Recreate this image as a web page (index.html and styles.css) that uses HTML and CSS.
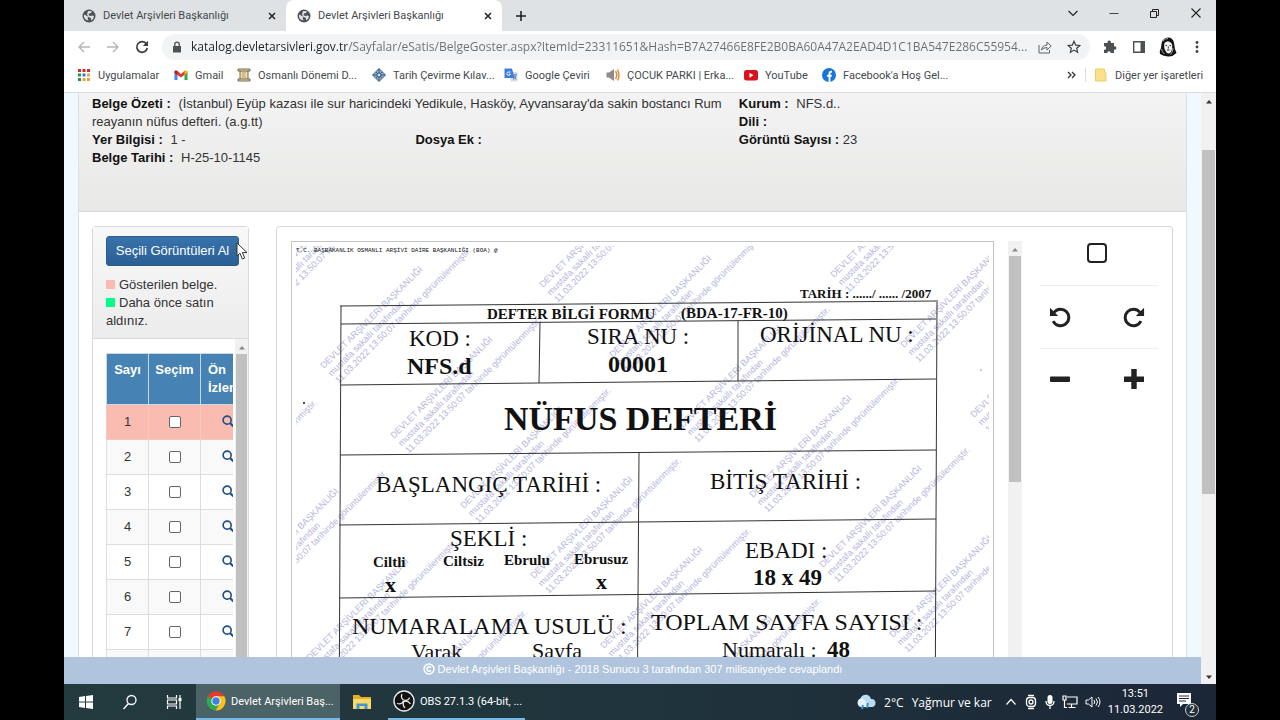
FILE: index.html
```html
<!DOCTYPE html>
<html lang="tr">
<head>
<meta charset="utf-8">
<title>Devlet Arşivleri Başkanlığı</title>
<link rel="stylesheet" href="styles.css">
</head>
<body>
<svg class="defs" aria-hidden="true">
  <symbol id="globe" viewBox="0 0 14 14"><circle cx="7" cy="7" r="6.5" fill="#4d5156"/><path d="M2 5.5 5 7l1.500 1-1 1 1 2.500Q3 11 2 8zM6 2l4 .2-1 1.800-2 .5-.5 1.500L8 7l3-.5 1 1q-.5 3-3 4L9 9 6.500 8 5 5.500z" fill="#dfe2e6"/></symbol>
  <symbol id="cross" viewBox="0 0 10 10"><path d="M2 2l6 6M8 2l-6 6" stroke="#222" stroke-width="1.500" fill="none"/></symbol>
  <symbol id="lens" viewBox="0 0 14 14"><circle cx="6" cy="6" r="4.700" fill="none" stroke="#1f4f82" stroke-width="1.900"/><path d="M9.300 9.300l4 4" stroke="#1f4f82" stroke-width="2.500"/></symbol>
  <symbol id="tri-up" viewBox="0 0 8 5"><path d="M1 4.500h6L4 1z" fill="currentColor"/></symbol>
  <symbol id="tri-down" viewBox="0 0 8 5"><path d="M1 .5h6L4 4z" fill="currentColor"/></symbol>
</svg>
<div class="screen">
  <header class="tabstrip">
    <button class="tab first"><svg class="i14"><use href="#globe"/></svg><span>Devlet Arşivleri Başkanlığı</span><svg class="i10"><use href="#cross"/></svg></button>
    <button class="tab active"><svg class="i14"><use href="#globe"/></svg><span>Devlet Arşivleri Başkanlığı</span><svg class="i10"><use href="#cross"/></svg></button>
    <button class="ghost newtab" aria-label="Yeni sekme"><svg width="12" height="12" viewBox="0 0 12 12"><path d="M6 1v10M1 6h10" stroke="#222" stroke-width="1.600"/></svg></button>
    <div class="wincontrols">
      <button class="ghost" aria-label="Sekme ara"><svg width="12" height="12" viewBox="0 0 12 12"><path d="M1.500 4l4.500 4.500L10.500 4" fill="none" stroke="#222" stroke-width="1.200"/></svg></button>
      <button class="ghost" aria-label="Küçült"><svg width="12" height="12" viewBox="0 0 12 12"><path d="M1.500 6.500h9" stroke="#444"/></svg></button>
      <button class="ghost" aria-label="Geri yükle"><svg width="12" height="12" viewBox="0 0 12 12"><path d="M1.500 4.500h6v6h-6zM3.500 4V2.500h6v6H8" fill="none" stroke="#222"/></svg></button>
      <button class="ghost" aria-label="Kapat"><svg width="12" height="12" viewBox="0 0 12 12"><path d="M1.500 1.500l9 9M10.500 1.500l-9 9" stroke="#222" stroke-width="1.100"/></svg></button>
    </div>
  </header>

  <div class="toolbar">
    <div class="nav">
      <button class="ghost" aria-label="Geri"><svg width="14" height="14" viewBox="0 0 14 14"><path d="M13 7H2M7 2L2 7l5 5" fill="none" stroke="#b3b5b8" stroke-width="1.400"/></svg></button>
      <button class="ghost" aria-label="İleri"><svg width="14" height="14" viewBox="0 0 14 14"><path d="M1 7h11M7 2l5 5-5 5" fill="none" stroke="#b3b5b8" stroke-width="1.400"/></svg></button>
      <button class="ghost" aria-label="Yenile"><svg width="14" height="14" viewBox="0 0 14 14"><path d="M11.500 4A5.300 5.300 0 1 0 12.300 8" fill="none" stroke="#3c4043" stroke-width="1.700"/><path d="M13 .8V6H7.800z" fill="#3c4043"/></svg></button>
    </div>
    <div class="omnibox">
      <svg width="10" height="12" viewBox="0 0 10 12"><path d="M1 5h8v6.500H1z" fill="#4d5156"/><path d="M2.800 5V3.300a2.200 2.200 0 0 1 4.400 0V5" fill="none" stroke="#4d5156" stroke-width="1.300"/></svg>
      <input class="url" type="text" aria-label="Adres" value="katalog.devletarsivleri.gov.tr/Sayfalar/eSatis/BelgeGoster.aspx?ItemId=23311651&amp;Hash=B7A27466E8FE2B0BA60A47A2EAD4D1C1BA547E286C55954...">
      <button class="ghost" aria-label="Paylaş"><svg width="14" height="14" viewBox="0 0 14 14"><path d="M1 5v8h10.500v-3" fill="none" stroke="#5f6368"/><path d="M3.500 10Q4 5.500 9 5V2l4.200 4L9 10V7.500Q5.500 7.500 3.500 10z" fill="none" stroke="#5f6368"/></svg></button>
      <button class="ghost" aria-label="Yer işareti ekle"><svg width="14" height="14" viewBox="0 0 14 14"><path d="M7 1.300l1.700 3.800 4.100.4-3.100 2.700.9 4L7 10.100l-3.600 2.100.9-4-3.100-2.700 4.100-.4z" fill="none" stroke="#3c4043" stroke-width="1.200"/></svg></button>
    </div>
    <div class="ext">
      <button class="ghost" aria-label="Uzantılar"><svg width="14" height="14" viewBox="0 0 14 14"><path d="M1 3h3.500a1.800 1.800 0 1 1 3.400 0H11v3.300a1.800 1.800 0 1 1 0 3.400V13H7.700a1.700 1.700 0 1 0-3.400 0H1V9.700a1.700 1.700 0 1 0 0-3.300z" fill="#4d5156"/></svg></button>
      <button class="ghost" aria-label="Yan panel"><svg width="14" height="14" viewBox="0 0 14 14"><path d="M1.700 1.700h10.600v10.600H1.700z" fill="#fff" stroke="#4d5156" stroke-width="1.400"/><path d="M8.500 1.500H13v11H8.500z" fill="#4d5156"/></svg></button>
      <button class="ghost" aria-label="Profil"><svg width="18" height="20" viewBox="0 0 18 20"><path d="M9 .5Q14 .5 15 6q.5 6 2.500 10-4 4-8.500 3.500T1 17Q0 14 2 11 2 .5 9 .5z" fill="#111"/><path d="M5.500 6q4-4 7.500 1 1 5-1.500 8.500-2 2-4 0Q4 11 5.500 6z" fill="#f2f2f2"/><path d="M6.500 8.500H8M10.500 8.500H12M8 13h2.500M9.300 9.500v2" stroke="#333" fill="none"/><path d="M2.500 12q.5 3 3 5M14 11q0 4-2.500 6.500M4 4q2-2.500 5-2.500" stroke="#aaa" fill="none"/></svg></button>
      <button class="ghost" aria-label="Menü"><svg width="4" height="14" viewBox="0 0 4 14"><g fill="#3c4043"><circle cx="2" cy="2.500" r="1.400"/><circle cx="2" cy="7" r="1.400"/><circle cx="2" cy="11.500" r="1.400"/></g></svg></button>
    </div>
  </div>

  <nav class="bookmarks">
    <a href="#"><svg class="i14" viewBox="0 0 14 14"><g fill="#c5352b"><path d="M1 1h3v3H1zM5.500 1h3v3h-3zM10 1h3v3h-3z"/></g><path d="M1 5.500h3v3H1z" fill="#2f8f46"/><path d="M5.500 5.500h3v3h-3z" fill="#3b78d8"/><path d="M10 5.500h3v3h-3zM5.500 10h3v3h-3zM10 10h3v3h-3z" fill="#e6a53a"/><path d="M1 10h3v3H1z" fill="#2f8f46"/></svg>Uygulamalar</a>
    <a href="#"><svg class="i14" viewBox="0 0 14 14"><path d="M.5 3.500V12h3V6z" fill="#4285f4"/><path d="M13.500 3.500V12h-3V6z" fill="#34a853"/><path d="M.5 3.500Q1 1.500 3 2.500L7 6l4-3.500v4L7 9.500 3.500 7z" fill="#e53a2e"/><path d="M.5 3.300v2L3.500 7V3z" fill="#b3261e"/><path d="M10.500 3q3-2 3 1.500l-3 2.500z" fill="#fbbc04"/></svg>Gmail</a>
    <a href="#"><svg class="i14" viewBox="0 0 14 14"><path d="M3 2h8v10H3z" fill="#efdcae" stroke="#7b6948"/><path d="M1 1h12v2H1zM1 11h12v2H1z" fill="#f0dfb4" stroke="#4c4436" stroke-width=".8"/><path d="M5 5h4M5 7h3M5 9h4" stroke="#b99c62"/></svg>Osmanlı Dönemi D...</a>
    <a href="#"><svg class="i14" viewBox="0 0 14 14"><path d="M7 .5 13.500 7 7 13.500.5 7z" fill="#8eb0cf" stroke="#46617d"/><path d="M4 4l6 6M10 4l-6 6M7 1v12M1 7h12" stroke="#34577e"/><circle cx="7" cy="7" r="2" fill="#d8e5f1" stroke="#275889"/></svg>Tarih Çevirme Kılav...</a>
    <a href="#"><svg class="i14" viewBox="0 0 14 14"><path d="M5 4h8.500v9.500H7z" fill="#d5dbe3"/><path d="M.5.5H8L10.500 10H.5z" fill="#3d7de0"/><path d="M6.500 4H4.800a1.700 1.700 0 1 0 1.500 2H5" fill="none" stroke="#fff"/><path d="M8.500 7H13M10.800 6v1M12 7.500q-.8 3-3 4M9.500 8l2.800 3.500" stroke="#5c7fb8" fill="none"/></svg>Google Çeviri</a>
    <a href="#"><svg class="i14" viewBox="0 0 14 14"><path d="M.5 4.500H3L8 1v12L3 9.500H.5z" fill="#8b8b8b"/><path d="M9.500 3q2.500 4 0 8M11.500 1.500q3 5.500 0 11" fill="none" stroke="#e28a3c" stroke-width="1.500"/></svg>ÇOCUK PARKI | Erka...</a>
    <a href="#"><svg class="i14" viewBox="0 0 14 14"><rect y="2" width="14" height="10.500" rx="2.500" fill="#d9131c"/><path d="M5.500 4.800v5L9.500 7.300z" fill="#fff"/></svg>YouTube</a>
    <a href="#"><svg class="i14" viewBox="0 0 14 14"><circle cx="7" cy="7" r="7" fill="#1a73d9"/><path d="M7.500 14V5.500Q7.500 3.500 10 3.800M5 7.800h4.700" fill="none" stroke="#fff" stroke-width="1.900"/></svg>Facebook'a Hoş Gel...</a>
    <button class="ghost more" aria-label="Diğer"><svg width="9" height="8" viewBox="0 0 9 8"><path d="M1 1l3 3-3 3M5 1l3 3-3 3" fill="none" stroke="#333" stroke-width="1.300"/></svg></button>
    <a class="other" href="#"><svg class="i14" viewBox="0 0 14 14"><path d="M1.500 1h9v3l1.500 1v8H1.500z" fill="#f9e08a" stroke="#ecd06c"/></svg>Diğer yer işaretleri</a>
  </nav>

  <div class="viewport">
    <div class="page">
      <main class="container">
        <section class="info">
          <div class="left">
            <p class="wide"><b>Belge Özeti :</b> <span>(İstanbul) Eyüp kazası ile sur haricindeki Yedikule, Hasköy, Ayvansaray'da sakin bostancı Rum reayanın nüfus defteri. (a.g.tt)</span></p>
            <p><b>Yer Bilgisi :</b> <span>1 -</span></p>
            <p><b>Dosya Ek :</b></p>
            <p><b>Belge Tarihi :</b> <span>H-25-10-1145</span></p>
          </div>
          <div class="right">
            <p><b>Kurum :</b> <span>NFS.d..</span></p>
            <p><b>Dili :</b></p>
            <p><b>Görüntü Sayısı :</b> 23</p>
          </div>
        </section>

        <div class="panels">
          <aside class="panel list">
            <div class="list-head">
              <button class="primary">Seçili Görüntüleri Al</button>
              <p><i class="sw shown"></i>Gösterilen belge.</p>
              <p><i class="sw bought"></i>Daha önce satın aldınız.</p>
            </div>
            <div class="list-body">
              <div class="tablewrap">
                <table>
                  <thead><tr><th>Sayı</th><th>Seçim</th><th>Ön İzleme</th></tr></thead>
                  <tbody>
                    <tr class="current"><td>1</td><td><input type="checkbox" aria-label="Seç 1"></td><td><a href="#" aria-label="Ön izle 1"><svg class="i12"><use href="#lens"/></svg></a></td></tr>
                    <tr><td>2</td><td><input type="checkbox" aria-label="Seç 2"></td><td><a href="#" aria-label="Ön izle 2"><svg class="i12"><use href="#lens"/></svg></a></td></tr>
                    <tr><td>3</td><td><input type="checkbox" aria-label="Seç 3"></td><td><a href="#" aria-label="Ön izle 3"><svg class="i12"><use href="#lens"/></svg></a></td></tr>
                    <tr><td>4</td><td><input type="checkbox" aria-label="Seç 4"></td><td><a href="#" aria-label="Ön izle 4"><svg class="i12"><use href="#lens"/></svg></a></td></tr>
                    <tr><td>5</td><td><input type="checkbox" aria-label="Seç 5"></td><td><a href="#" aria-label="Ön izle 5"><svg class="i12"><use href="#lens"/></svg></a></td></tr>
                    <tr><td>6</td><td><input type="checkbox" aria-label="Seç 6"></td><td><a href="#" aria-label="Ön izle 6"><svg class="i12"><use href="#lens"/></svg></a></td></tr>
                    <tr><td>7</td><td><input type="checkbox" aria-label="Seç 7"></td><td><a href="#" aria-label="Ön izle 7"><svg class="i12"><use href="#lens"/></svg></a></td></tr>
                    <tr class="empty"><td></td><td></td><td></td></tr>
                  </tbody>
                </table>
              </div>
              <div class="bar bar-list"><svg class="tri"><use href="#tri-up"/></svg><i></i></div>
            </div>
          </aside>

          <section class="panel viewer">
            <div class="sheet">
              <svg class="scan" viewBox="0 0 693 500">
                <defs>
                  <g id="stamp" class="stamp">
                    <text x="0" y="0">DEVLET ARŞİVLERİ BAŞKANLIĞI</text>
                    <text x="0" y="11">mustafa sakallı tarafından</text>
                    <text x="0" y="21">11.03.2022 13:50:07 tarihinde görüntülenmiştir.</text>
                  </g>
                </defs>
                <g>
                  <use href="#stamp" transform="translate(-42 53) rotate(-45)"/>
                  <use href="#stamp" transform="translate(28 123) rotate(-45)"/>
                  <use href="#stamp" transform="translate(98 193) rotate(-45)"/>
                  <use href="#stamp" transform="translate(168 263) rotate(-45)"/>
                  <use href="#stamp" transform="translate(238 333) rotate(-45)"/>
                  <use href="#stamp" transform="translate(308 403) rotate(-45)"/>
                  <use href="#stamp" transform="translate(378 473) rotate(-45)"/>
                  <use href="#stamp" transform="translate(247 42) rotate(-45)"/>
                  <use href="#stamp" transform="translate(317 112) rotate(-45)"/>
                  <use href="#stamp" transform="translate(387 182) rotate(-45)"/>
                  <use href="#stamp" transform="translate(457 252) rotate(-45)"/>
                  <use href="#stamp" transform="translate(527 322) rotate(-45)"/>
                  <use href="#stamp" transform="translate(597 392) rotate(-45)"/>
                  <use href="#stamp" transform="translate(538 32) rotate(-45)"/>
                  <use href="#stamp" transform="translate(608 102) rotate(-45)"/>
                  <use href="#stamp" transform="translate(678 172) rotate(-45)"/>
                  <use href="#stamp" transform="translate(-126 275) rotate(-45)"/>
                  <use href="#stamp" transform="translate(-56 345) rotate(-45)"/>
                  <use href="#stamp" transform="translate(14 415) rotate(-45)"/>
                  <use href="#stamp" transform="translate(84 485) rotate(-45)"/>
                </g>
                <path class="rule" d="M44 60 640 55M45 78 640 73M45 139 640 133M44 209 640 204M43 279 640 273M43 352 640 345M45 60 43 500M641 54 639 500M244 76 243 137M442 75 442 135M343 207 341 500"/>
                <text class="mono" x="0" y="6">T.C. BAŞBAKANLIK OSMANLI ARŞİVİ DAİRE BAŞKANLIĞI (BOA) @</text>
                <g class="b">
                  <text class="s13" x="504" y="52">TARİH : ....../ ...... /2007</text>
                  <text class="s15" x="191" y="73">DEFTER BİLGİ FORMU</text>
                  <text class="s15" x="385" y="72">(BDA-17-FR-10)</text>
                  <text class="s24" x="111" y="128">NFS.d</text>
                  <text class="s24" x="312" y="126">00001</text>
                  <text class="s34" x="208" y="184">NÜFUS DEFTERİ</text>
                  <text class="s15" x="77" y="321">Ciltli</text>
                  <text class="s15" x="147" y="320">Ciltsiz</text>
                  <text class="s15" x="208" y="319">Ebrulu</text>
                  <text class="s15" x="278" y="318">Ebrusuz</text>
                  <text class="s22" x="89" y="346">x</text>
                  <text class="s22" x="300" y="343">x</text>
                  <text class="s23" x="457" y="339">18 x 49</text>
                  <text class="s23" x="531" y="411">48</text>
                </g>
                <g class="s23">
                  <text x="113" y="100">KOD :</text>
                  <text x="291" y="98">SIRA NU :</text>
                  <text x="464" y="96">ORİJİNAL NU :</text>
                  <text x="80" y="246">BAŞLANGIÇ TARİHİ :</text>
                  <text x="414" y="243">BİTİŞ TARİHİ :</text>
                  <text x="154" y="300">ŞEKLİ :</text>
                  <text x="449" y="312">EBADI :</text>
                </g>
                <g class="s24">
                  <text x="56" y="388">NUMARALAMA USULÜ :</text>
                  <text x="355" y="384">TOPLAM SAYFA SAYISI :</text>
                </g>
                <g class="s22">
                  <text x="115" y="413">Varak</text>
                  <text x="236" y="412">Sayfa</text>
                  <text x="426" y="411">Numaralı :</text>
                </g>
                <circle cx="8" cy="157" r="1"/><circle cx="685" cy="124" r=".6"/>
              </svg>
            </div>
            <div class="bar bar-sheet"><svg class="tri"><use href="#tri-up"/></svg><i></i></div>
            <div class="tools">
              <div class="trow"><input type="checkbox" aria-label="Tam ekran"></div>
              <div class="trow two">
                <button class="ghost" aria-label="Sola döndür"><svg width="22" height="22" viewBox="0 0 24 24"><path d="M5.500 7A9 9 0 1 1 4.500 16.500" fill="none" stroke="#222" stroke-width="3.200"/><path d="M1 2v9h9z" fill="#222"/></svg></button>
                <button class="ghost" aria-label="Sağa döndür"><svg width="22" height="22" viewBox="0 0 24 24"><path d="M18.500 7A9 9 0 1 0 19.500 16.500" fill="none" stroke="#222" stroke-width="3.200"/><path d="M23 2v9h-9z" fill="#222"/></svg></button>
              </div>
              <div class="trow two">
                <button class="ghost" aria-label="Uzaklaştır"><svg width="22" height="22" viewBox="0 0 22 22"><rect x="1" y="8.500" width="20" height="5.500" rx="1" fill="#222"/></svg></button>
                <button class="ghost" aria-label="Yakınlaştır"><svg width="22" height="22" viewBox="0 0 22 22"><path d="M1 8.500h7.300V1h5.400v7.500H21V14h-7.300v7H8.300v-7H1z" fill="#222"/></svg></button>
              </div>
            </div>
          </section>
        </div>
      </main>
      <footer class="foot"><svg width="12" height="12" viewBox="0 0 12 12"><circle cx="6" cy="6" r="5" fill="none" stroke="#fff" stroke-width="1.500"/><path d="M8 4.500a2.300 2.300 0 1 0 0 3" fill="none" stroke="#fff" stroke-width="1.500"/></svg>Devlet Arşivleri Başkanlığı - 2018 Sunucu 3 tarafından 307 milisaniyede cevaplandı</footer>
    </div>
    <div class="bar bar-page"><svg class="tri"><use href="#tri-up"/></svg><i></i><svg class="tri end"><use href="#tri-down"/></svg></div>
  </div>

  <footer class="taskbar">
    <button class="ghost sys" aria-label="Başlat"><svg width="16" height="16" viewBox="0 0 16 16"><path d="M1 3l6-1v5.500H1zM8 2l7-1v6.500H8zM1 8.500h6V14l-6-1zM8 8.500h7V15l-7-1z" fill="#fff"/></svg></button>
    <button class="ghost sys" aria-label="Ara"><svg width="16" height="16" viewBox="0 0 16 16"><circle cx="9.500" cy="6" r="4.500" fill="none" stroke="#fff" stroke-width="1.300"/><path d="M6.500 9.500l-5 5.500" stroke="#fff" stroke-width="1.300"/></svg></button>
    <button class="ghost sys" aria-label="Görev görünümü"><svg width="16" height="16" viewBox="0 0 16 16"><path d="M1.500 1v3h9V1M1.500 15v-3h9v3M1.500 6h9v4h-9zM14 1v14" fill="none" stroke="#fff" stroke-width="1.200"/><path d="M12.500 4h3v3h-3z" fill="#fff"/></svg></button>
    <button class="app current"><svg width="20" height="20" viewBox="0 0 20 20"><path d="M10 10 1.800 5.200A9.500 9.500 0 0 1 18.300 5.300z" fill="#e33b2e"/><path d="M10 10 1.800 5.200A9.500 9.500 0 0 0 9.500 19.500L14 12z" fill="#2fa84f"/><path d="M10 5.300h8.300A9.500 9.500 0 0 1 9.500 19.500L14 12z" fill="#fbc116"/><circle cx="10" cy="10" r="4.700" fill="#fff"/><circle cx="10" cy="10" r="3.700" fill="#3f7fe8"/></svg><span>Devlet Arşivleri Baş...</span></button>
    <button class="ghost sys" aria-label="Dosya Gezgini"><svg width="20" height="18" viewBox="0 0 20 18"><path d="M1 2h6l2 2h10v12H1z" fill="#e9ab2c"/><path d="M1 6h18v10H1z" fill="#fbd967"/><path d="M4.500 16v-5.500h11V16h-3v-3h-5v3z" fill="#3f97d3"/></svg></button>
    <button class="app obs"><svg width="22" height="22" viewBox="0 0 22 22"><circle cx="11" cy="11" r="10" fill="#111" stroke="#e8e8e8" stroke-width="1.400"/><path d="M9 4q-2 4.500 2.500 6.500 4.500 0 5-3M17.500 14q-2.500-4-6.500-2.500-2 3.500 1 6.500M4 13.500q4.500 1.500 6.500-2.500" fill="none" stroke="#e4e4e4" stroke-width="1.300"/></svg><span>OBS 27.1.3 (64-bit, ...</span></button>
    <div class="tray">
      <button class="ghost weather"><svg width="20" height="18" viewBox="0 0 20 18"><path d="M5 14a4.500 4.500 0 0 1-.5-8.500A5.500 5.500 0 0 1 15 6a4 4 0 0 1 1 8z" fill="#b9dcf5"/><path d="M5 14a4.500 4.500 0 0 1-.5-8.500Q9 5 10 10t-2 4z" fill="#e4f2fc"/><path d="M7 12l-1 4M12 10l-1 5" stroke="#3c93d8" stroke-width="2"/></svg><span>2°C</span><span>Yağmur ve kar</span></button>
      <svg width="12" height="12" viewBox="0 0 12 12"><path d="M1.500 8.500 6 3.500l4.500 5" fill="none" stroke="#fff" stroke-width="1.200"/></svg>
      <svg width="14" height="16" viewBox="0 0 14 16"><circle cx="7" cy="8" r="2" fill="none" stroke="#fff" stroke-width="1.300"/><rect x="2.500" y="3.500" width="9" height="9" rx="3" fill="none" stroke="#fff" stroke-width="1.300"/><path d="M4 1.500h6M4 14.500h6" stroke="#fff" stroke-width="1.300"/></svg>
      <svg width="10" height="16" viewBox="0 0 10 16"><rect x="2.500" y="1" width="5" height="9" rx="2.500" fill="#fff"/><path d="M1 7q0 4.500 4 4.500T9 7M5 11v4" fill="none" stroke="#fff" stroke-width="1.300"/></svg>
      <svg width="16" height="16" viewBox="0 0 16 16"><path d="M5 3h10v7H5M9.500 10v3M6.500 13.500h7M1 2h3v4H1zM2.500 6v7.500H5" fill="none" stroke="#fff" stroke-width="1.200"/></svg>
      <svg width="16" height="16" viewBox="0 0 16 16"><path d="M1 6h2.500L7 3v10L3.500 10H1z" fill="none" stroke="#fff"/><path d="M9 6q1.500 2 0 4M11 4.500q3 3.500 0 7M13 3q4 5 0 10" fill="none" stroke="#fff"/></svg>
      <div class="clock"><span>13:51</span><span>11.03.2022</span></div>
      <button class="ghost note" aria-label="Bildirimler"><svg width="22" height="22" viewBox="0 0 22 22"><path d="M1 2h14v11H7l-3 3v-3H1z" fill="#fff"/><path d="M3 5h10M3 7.500h10M3 10h7" stroke="#1d2b38"/></svg><span class="badge">2</span></button>
    </div>
  </footer>
</div>
<svg class="pointer" width="12" height="18" viewBox="0 0 12 18"><path d="M1 1v13l3-2.800L6.300 17l2.400-1-2.300-5.400H11z" fill="#fff" stroke="#333"/></svg>
</body>
</html>
```
FILE: styles.css
```css
* { box-sizing: border-box; }
body { margin: 0; background: #000; font-family: "Liberation Sans", Arial, sans-serif; font-size: 13px; color: #333; }
button, input { font: inherit; color: inherit; }
p { margin: 0; }
a { color: inherit; text-decoration: none; }
svg { flex: none; display: block; }
.defs { position: absolute; width: 0; height: 0; }
.i14 { width: 14px; height: 14px; }
.i12 { width: 12px; height: 12px; }
.i10 { width: 10px; height: 10px; }
.ghost { background: none; border: 0; padding: 0; display: flex; align-items: center; justify-content: center; }

.screen { height: 100vh; margin: 0 5%; display: flex; flex-direction: column; background: #fff; overflow: hidden; }

.tabstrip { flex: none; height: 31px; background: #dee2e5; display: flex; font-family: Roboto, "Noto Sans", sans-serif; font-size: 11px; }
.tab { flex: 0 1 216px; min-width: 0; border: 0; background: none; padding: 0 9px 0 18px; display: flex; align-items: center; gap: 7px; text-align: left; color: #45494d; }
.tab.first { flex-basis: 222px; }
.tab span { flex: 1; white-space: nowrap; overflow: hidden; }
.tab.active { background: #fff; border-radius: 8px 8px 0 0; padding-left: 11px; }
.newtab { width: 38px; }
.wincontrols { margin-left: auto; display: flex; }
.wincontrols .ghost { width: 41px; height: 26px; }

.toolbar { flex: none; height: 31px; display: flex; align-items: center; }
.nav { display: flex; padding-left: 5px; width: 98px; }
.nav .ghost { width: 29px; }
.omnibox { flex: 1; min-width: 0; height: 26px; border-radius: 13px; background: #f1f3f4; display: flex; align-items: center; padding: 0 2px 0 10px; }
.url { flex: 1; min-width: 0; border: 0; outline: 0; padding: 0 0 0 9px; font-family: "Open Sans", "Noto Sans", sans-serif; font-size: 12px; color: transparent; background: linear-gradient(90deg, #202124 165px, #6a6e73 165px); -webkit-background-clip: text; background-clip: text; }
.omnibox .ghost { width: 29px; }
.ext { display: flex; width: 126px; padding-left: 5px; }
.ext .ghost { width: 29px; }

.bookmarks { flex: none; height: 31px; display: grid; grid-template-columns: 97px 63px 135px 132px 102px 138px 78px 1fr 14px 138px; align-items: center; padding: 0 0 4px 13px; border-bottom: 1px solid #d8dbde; font-family: Roboto, "Noto Sans", sans-serif; font-size: 11px; color: #45494d; }
.bookmarks a { display: flex; align-items: center; gap: 7px; white-space: nowrap; }
.bookmarks .other { border-left: 1px solid #dadce0; padding-left: 8px; margin-left: 7px; }

.viewport { flex: 1; min-height: 0; display: flex; }
.page { flex: 1; min-width: 0; background: #f0f9ff; display: flex; flex-direction: column; }
.container { flex: 1; min-height: 0; margin: 0 14px; background: #fff; border: solid #dcdfe2; border-width: 0 1px; display: flex; flex-direction: column; overflow: hidden; }
.info { flex: none; height: 119px; padding: 2px 16px 0 13px; line-height: 18px; display: grid; grid-template-columns: 60% 1fr; background: linear-gradient(#f3f3f3, #e8e8e7); border-bottom: 1px solid #d8d8d8; }
.info .left { display: grid; grid-template-columns: 1fr 1fr; align-content: start; }
.info .wide { grid-column: 1 / -1; }
.info b { color: #111; }
.info b + span { margin-left: 4px; }

.panels { flex: 1; min-height: 0; display: flex; gap: 27px; padding: 14px 13px 0; }
.panel { border: 1px solid #d9d9d9; border-bottom: 0; border-radius: 4px 4px 0 0; min-height: 0; }
.list { flex: 0 0 157px; display: flex; flex-direction: column; }
.list-head { flex: none; padding: 9px 9px 8px 13px; line-height: 18px; background: linear-gradient(#f8f8f8, #ececec); border-bottom: 1px solid #d9d9d9; }
.primary { display: block; width: 100%; height: 30px; margin-bottom: 10px; padding: 0; border: 1px solid #2b5c8a; border-radius: 3px; background: linear-gradient(#3873ab, #2a5f94); color: #fff; white-space: nowrap; }
.sw { display: inline-block; width: 9px; height: 9px; margin-right: 4px; }
.shown { background: #fabcb0; }
.bought { background: #0f8; }
.list-body { flex: 1; min-height: 0; display: flex; justify-content: space-between; padding-left: 13px; }
.tablewrap { width: 127px; overflow: hidden; padding-top: 14px; }
table { border-collapse: collapse; table-layout: fixed; width: 148px; line-height: 18px; }
th, td { border: 1px solid #ddd; padding: 0; height: 35px; text-align: center; vertical-align: middle; }
th { height: 51px; background: #4682b4; color: #fff; vertical-align: top; padding-top: 7px; border-color: #c8d8e5; }
th:first-child { width: 42px; }
th:nth-child(2) { width: 52px; }
th:last-child { text-align: left; padding-left: 7px; width: 54px; }
td:last-child { padding-bottom: 2px; }
td a { display: flex; justify-content: center; }
tbody tr:nth-child(even) { background: #f9f9f9; }
tbody .current { background: #fabcb0; }
tbody .current td { border-color: #f3c9c0; }
input[type=checkbox] { appearance: none; display: block; margin: 0 auto; width: 12px; height: 12px; border: 1px solid #666; border-radius: 2px; background: #fff; }

.bar { flex: none; background: #f1f1f1; display: flex; flex-direction: column; color: #888; }
.bar .tri { width: 8px; height: 5px; margin: 6px auto 4px; }
.bar i { margin: 0 1px; background: #c1c1c1; }
.bar-list { width: 13px; }
.bar-list i { flex: 1; }
.bar-sheet { width: 14px; }
.bar-sheet i { height: 226px; }
.bar-page { width: 15px; color: #333; }
.bar-page i { height: 344px; margin-top: 42px; }
.bar-page .end { margin-top: auto; }

.viewer { flex: 1; min-width: 0; display: flex; padding: 14px 14px 0; }
.sheet { flex: 1; min-width: 0; border: 1px solid #c4c4c4; border-bottom: 0; padding: 4px 4px 0; margin-right: 14px; overflow: hidden; }
.scan { width: 100%; height: auto; font-family: "Liberation Serif", "Times New Roman", serif; fill: #111; }
.rule { fill: none; stroke: #333; stroke-width: 1; }
.b { font-weight: bold; }
.s13 { font-size: 13px; }
.s15 { font-size: 15px; }
.s22 { font-size: 22px; }
.s23 { font-size: 23px; }
.s24 { font-size: 24px; }
.s34 { font-size: 34px; }
.mono { font-family: "Liberation Mono", monospace; font-size: 6px; }
.stamp { font-family: "Liberation Sans", Arial, sans-serif; font-size: 9px; fill: #b4b4dc; }

.tools { flex: 0 0 118px; margin-left: 18px; }
.trow { height: 63px; display: flex; align-items: center; border-bottom: 1px solid #eee; }
.trow:first-child { height: 45px; padding: 0 4px 20px 0; }
.trow input { width: 20px; height: 20px; margin: 0 auto; border: 2px solid #222; border-radius: 4px; }
.two { justify-content: space-between; padding: 0 13px 0 9px; }
.trow:last-child { border: 0; padding-bottom: 3px; }

.foot { flex: none; height: 27px; padding-bottom: 4px; background: #b0c4de; color: #fff; font-size: 11px; display: flex; align-items: center; justify-content: center; gap: 3px; }

.taskbar { flex: none; height: 36px; background: linear-gradient(90deg, #233a3e, #1f343c 50%, #1c2637); color: #fff; display: flex; align-items: stretch; font-family: Roboto, "Noto Sans", sans-serif; font-size: 11px; }
.sys { width: 44px; }
.app { border: 0; background: none; display: flex; align-items: center; gap: 5px; padding: 0 0 0 10px; width: 144px; white-space: nowrap; border-bottom: 2px solid #76b9e8; }
.app.current { background: #4b6266; }
.obs { width: 137px; padding-left: 5px; margin-left: 4px; }
.tray { margin-left: auto; display: flex; align-items: center; gap: 7px; padding-right: 18px; }
.weather { gap: 8px; font-family: "Open Sans", "Noto Sans", sans-serif; font-size: 12px; margin-right: 6px; }
.clock { display: flex; flex-direction: column; align-items: center; line-height: 16px; padding-right: 6px; }
.note { position: relative; }
.badge { position: absolute; right: -1px; bottom: -4px; width: 14px; height: 14px; border-radius: 50%; background: #23303c; border: 1px solid #ccc; font-size: 10px; line-height: 12px; text-align: center; }

.pointer { position: absolute; left: 236px; top: 242px; }
```
